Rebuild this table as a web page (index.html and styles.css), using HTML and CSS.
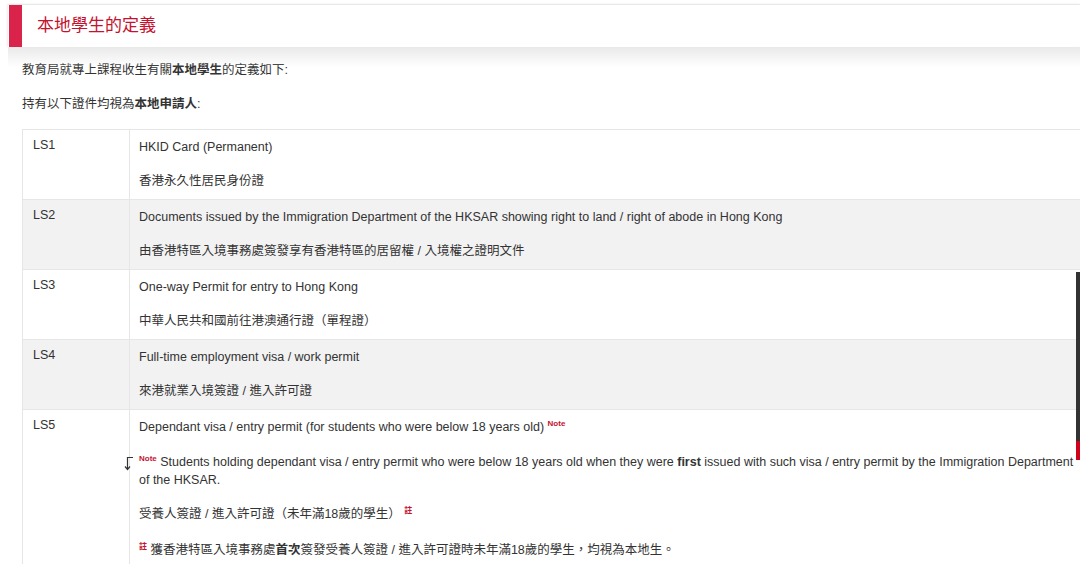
FILE: index.html
```html
<!DOCTYPE html>
<html>
<head>
  <meta charset="UTF-8">
  <title>本地學生的定義</title>
  <link rel="stylesheet" href="styles.css">
</head>
<body>
  <div class="section-header">
    <span class="header-mark"></span>
    <h2>本地學生的定義</h2>
  </div>

  <div class="content">
    <p>教育局就專上課程收生有關<b>本地學生</b>的定義如下:</p>
    <p>持有以下證件均視為<b>本地申請人</b>:</p>

    <table class="doc-table">
      <tr>
        <td class="code">LS1</td>
        <td class="desc">
          <p>HKID Card (Permanent)</p>
          <p>香港永久性居民身份證</p>
        </td>
      </tr>
      <tr class="alt">
        <td class="code">LS2</td>
        <td class="desc">
          <p>Documents issued by the Immigration Department of the HKSAR showing right to land / right of abode in Hong Kong</p>
          <p>由香港特區入境事務處簽發享有香港特區的居留權 / 入境權之證明文件</p>
        </td>
      </tr>
      <tr>
        <td class="code">LS3</td>
        <td class="desc">
          <p>One-way Permit for entry to Hong Kong</p>
          <p>中華人民共和國前往港澳通行證（單程證）</p>
        </td>
      </tr>
      <tr class="alt">
        <td class="code">LS4</td>
        <td class="desc">
          <p>Full-time employment visa / work permit</p>
          <p>來港就業入境簽證 / 進入許可證</p>
        </td>
      </tr>
      <tr>
        <td class="code">LS5</td>
        <td class="desc">
          <p>Dependant visa / entry permit (for students who were below 18 years old) <span class="note">Note</span></p>
          <p class="note-line">
            <svg class="jump-icon" width="10" height="15" viewBox="0 0 10 15">
              <path d="M9 1.5H3.5V13" fill="none" stroke="#333" stroke-width="1.2"/>
              <path d="M1 10.5L3.5 13.5L6 10.5" fill="none" stroke="#333" stroke-width="1.2"/>
            </svg>
            <span class="note">Note</span> Students holding dependant visa / entry permit who were below 18 years old when they were <b>first</b> issued with such visa / entry permit by the Immigration Department of the HKSAR.
          </p>
          <p>受養人簽證 / 進入許可證（未年滿18歲的學生） <span class="note">註</span></p>
          <p><span class="note">註</span> 獲香港特區入境事務處<b>首次</b>簽發受養人簽證 / 進入許可證時未年滿18歲的學生，均視為本地生。</p>
        </td>
      </tr>
    </table>
  </div>

  <div class="side-rail">
    <span class="rail-active"></span>
  </div>
</body>
</html>
```

FILE: styles.css
```css
html, body {
  overflow: hidden;
}

body {
  margin: 0;
  font-family: 'Liberation Sans', 'Noto Sans CJK TC', sans-serif;
  font-size: 12.5px;
  color: #333;
  background-color: #fff;
}

.section-header {
  position: relative;
  display: flex;
  align-items: center;
  margin: 4px 0 0 8px;
  height: 42px;
  background-color: #fff;
  border-top: 1px solid #e8e8e8;
  box-shadow: -1px 0 2px rgba(0, 0, 0, 0.08);
}

.section-header::after {
  content: "";
  position: absolute;
  left: 0;
  right: 0;
  top: 42px;
  height: 20px;
  background: linear-gradient(#e9e9e9, rgba(255, 255, 255, 0));
}

.header-mark {
  align-self: stretch;
  width: 13px;
  margin-left: 1px;
  background-color: #d9234a;
}

h2 {
  margin: 0 0 0 15px;
  padding-bottom: 5px;
  font-size: 17px;
  font-weight: normal;
  color: #c4122f;
}

.content {
  padding: 14px 0 0 22px;
}

.content > p {
  margin: 0 0 16px;
  line-height: 18px;
}

.doc-table {
  border-collapse: collapse;
  width: 1066px;
  margin-top: 16px;
}

.doc-table td {
  border: 1px solid #e6e6e6;
  vertical-align: top;
  padding: 8px 10px 9px;
}

.doc-table tr.alt td {
  background-color: #f2f2f2;
}

.doc-table td.code {
  width: 86px;
}

.doc-table td.desc {
  position: relative;
  padding-left: 9px;
}

.doc-table p {
  margin: 0 0 16px;
  line-height: 18px;
}

.doc-table p:last-child {
  margin-bottom: 0;
}

.doc-table p.note-line {
  line-height: 17px;
}

.note {
  position: relative;
  top: -5px;
  font-size: 8px;
  font-weight: bold;
  color: #c4122f;
}

.jump-icon {
  position: absolute;
  left: -6px;
  margin-top: 2px;
}

.side-rail {
  position: fixed;
  right: 0;
  top: 272px;
  width: 4px;
  height: 188px;
  display: flex;
  flex-direction: column;
  justify-content: flex-end;
  background-color: #333;
}

.rail-active {
  height: 19px;
  background-color: #d0021b;
}
```
